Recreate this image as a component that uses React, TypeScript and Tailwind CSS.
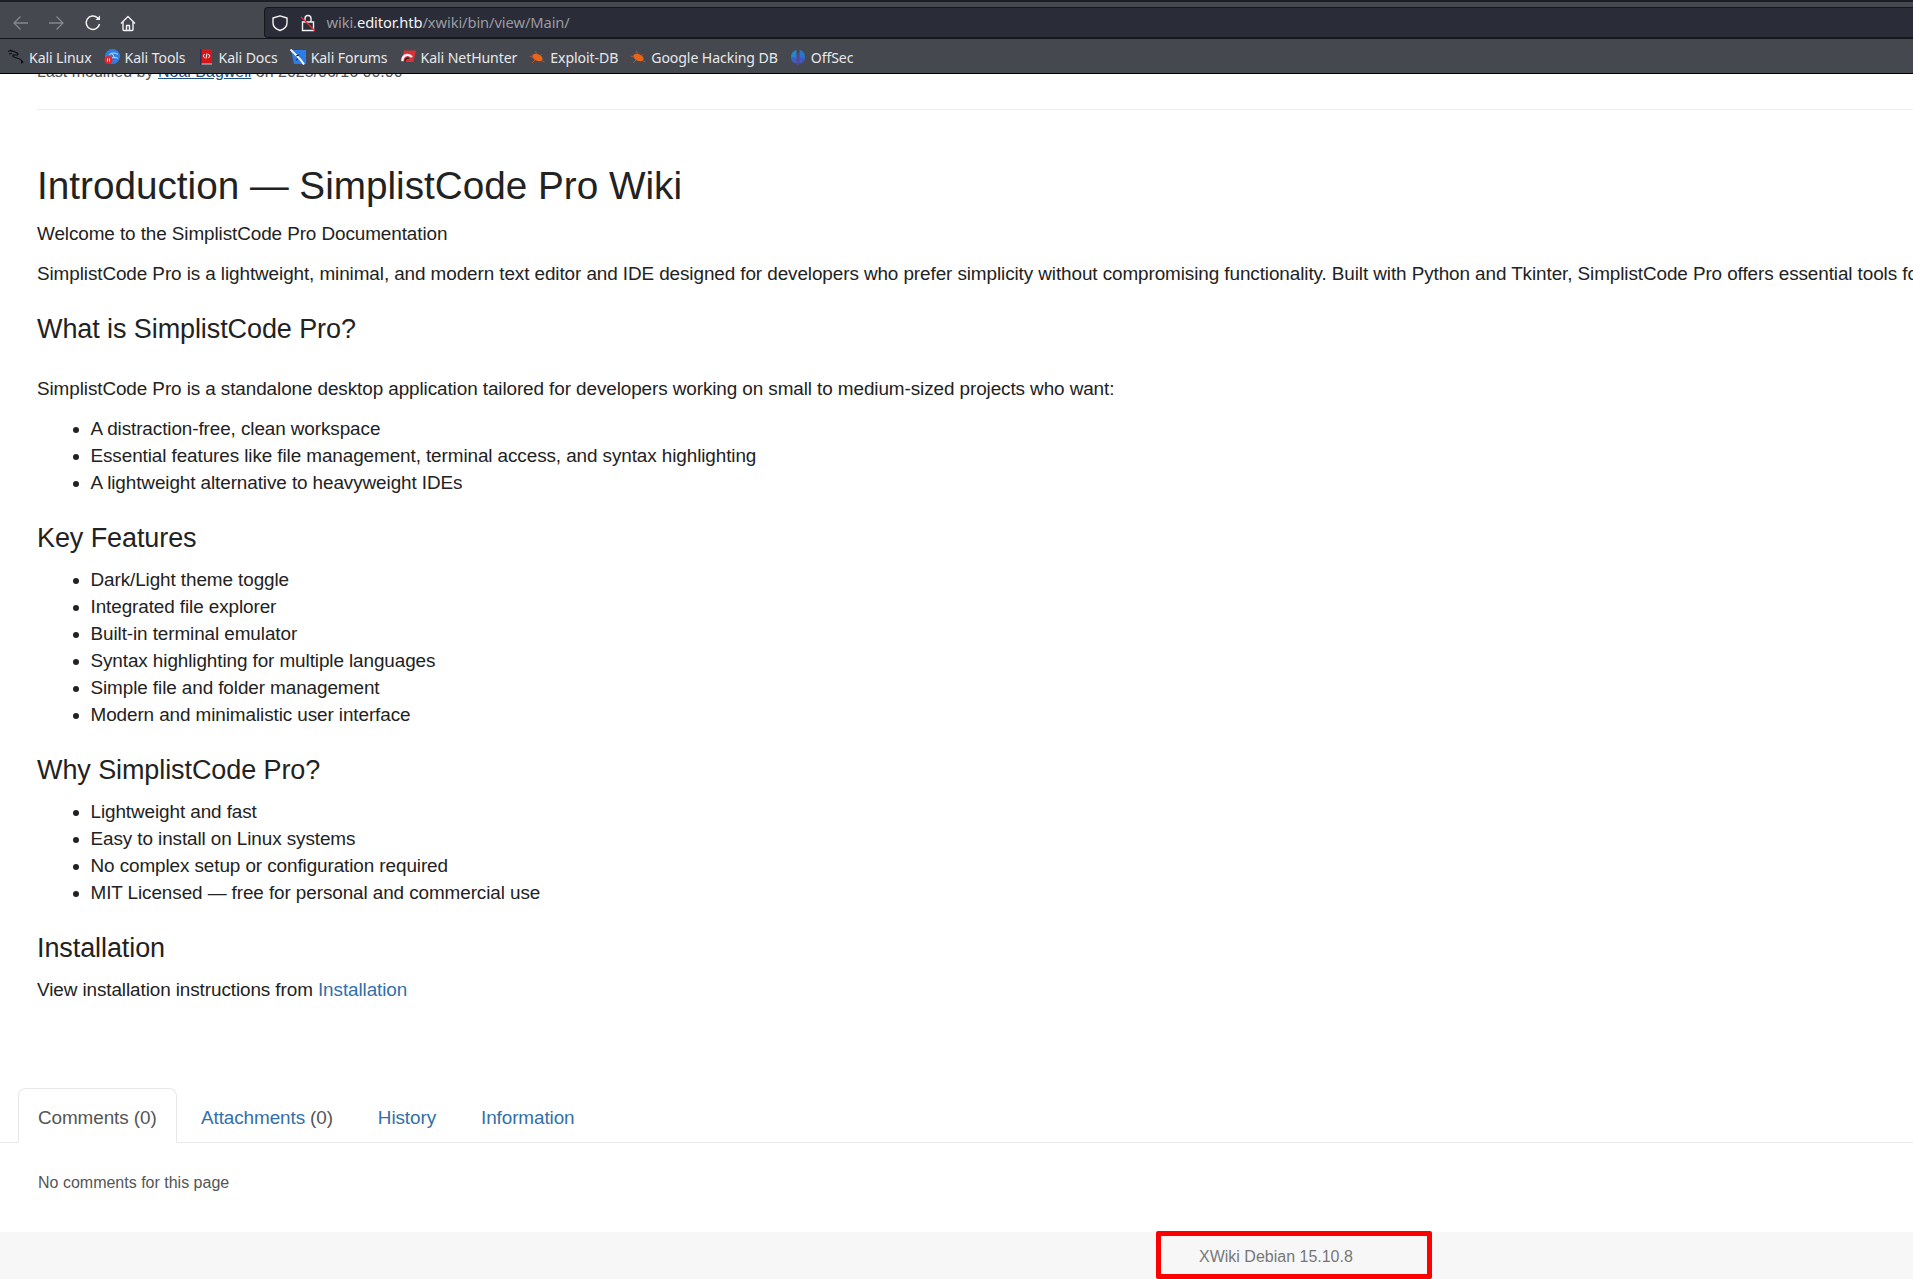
const bookmarks = [
  { label: 'Kali Linux', icon: <KaliIcon /> },
  { label: 'Kali Tools', icon: <ToolsIcon /> },
  { label: 'Kali Docs', icon: <DocsIcon /> },
  { label: 'Kali Forums', icon: <ForumsIcon /> },
  { label: 'Kali NetHunter', icon: <NetHunterIcon /> },
  { label: 'Exploit-DB', icon: <BugIcon /> },
  { label: 'Google Hacking DB', icon: <BugIcon /> },
  { label: 'OffSec', icon: <OffSecIcon /> },
];

function KaliIcon() {
  return (
    <svg width="16" height="16" viewBox="0 0 16 16" fill="none" stroke="#0c0c0c" strokeWidth="1.1">
      <path d="M0 2.500c1-.8 2.500-1 4-.5 2 .5 4 1 5.500 2.200 1 .9.500 1.800-1 1.800S5.500 5.500 5 6.500s1 1.800 3 2.300 4 .8 5 2.200c.8 1 .7 2.500.2 3.500" />
      <path d="M2 0.800l2.500 1.400M1 5l3-.5M13.500 11.500c1.200.8 1.500 1.800 1.200 2.700" />
    </svg>
  );
}

function ToolsIcon() {
  return (
    <svg width="16" height="16" viewBox="0 0 16 16">
      <circle cx="8.500" cy="7.500" r="7.500" fill="#2f7fe0" />
      <path d="M5 6c3-2.500 6-2.500 9-.5M7 4c2 1 3 3 3 5M8 9c2-.8 4-.8 6 .5" stroke="#d8e8fb" strokeWidth="0.900" fill="none" />
      <circle cx="4.500" cy="11" r="4" fill="#e8242c" />
      <path d="M3.500 9.500v3M5.500 9.500v3" stroke="#fff" strokeWidth="1" />
    </svg>
  );
}

function DocsIcon() {
  return (
    <svg width="16" height="16" viewBox="0 0 16 16">
      <rect x="2" y="0" width="12" height="15" fill="#d4161b" />
      <rect x="2" y="0" width="1.500" height="16" fill="#2b2f55" />
      <rect x="3.500" y="14.500" width="10.500" height="1" fill="#c9c9d2" />
      <path d="M6.800 5L5 7l1.800 2M10.200 5L12 7l-1.800 2M9 4.500L8 9.500" stroke="#fff" strokeWidth="1" fill="none" />
    </svg>
  );
}

function ForumsIcon() {
  return (
    <svg width="16" height="16" viewBox="0 0 16 16">
      <path d="M1 1h15v14H4z" fill="#2a7de6" />
      <path d="M0.500 0.500C3 3 5 5 8 8s4.500 5 6 7.500" stroke="#f4f4f4" strokeWidth="2" fill="none" />
      <path d="M6 7l3-1M8 10l-2 1" stroke="#14202e" strokeWidth="1" />
    </svg>
  );
}

function NetHunterIcon() {
  return (
    <svg width="16" height="16" viewBox="0 0 16 16">
      <path d="M4 1.500h12l-2.500 11.500H1z" fill="#dc3039" />
      <path d="M2.500 12c-.5-5 5-8.500 9.500-4" stroke="#f5f5f5" strokeWidth="2.400" fill="none" />
      <path d="M5 13c-.5-3 2-4.500 4-3.500" stroke="#1b1b1f" strokeWidth="1.200" fill="none" />
    </svg>
  );
}

function BugIcon() {
  return (
    <svg width="16" height="16" viewBox="0 0 16 16">
      <ellipse cx="8.500" cy="8.500" rx="5.500" ry="3.300" fill="#e8651c" transform="rotate(25 8.500 8.500)" />
      <path d="M0.500 7l4 1.500M3 14l3-3M6 2l2 3M13 5l-2 2M15.500 13l-3-1" stroke="#b9562a" strokeWidth="0.900" />
    </svg>
  );
}

function OffSecIcon() {
  return (
    <svg width="16" height="16" viewBox="0 0 16 16">
      <path d="M6.500 1C3 1.500 1 4.500 1 8s2.500 6 5.500 6.500z" fill="#2484cf" />
      <path d="M9.500 1C13 1.500 15 4.500 15 8s-2.500 6-5.500 6.500z" fill="#2a76c9" />
      <path d="M1 8c0 3.500 2.500 6 5.500 6.500V9zM15 8c0 3.500-2.500 6-5.500 6.500V9z" fill="#4a4cc8" opacity="0.700" />
      <rect x="7.500" y="4" width="1" height="12" fill="#6a3fd0" />
    </svg>
  );
}

const sans = 'font-["Liberation_Sans",Arial,sans-serif]';

function Browser() {
  return (
    <header className='h-[74px] bg-[#45484f] font-["Noto_Sans",sans-serif] border-b border-black'>
      <div className="h-[2px] bg-[#1d1e24]" />
      <div className="h-[36px] flex items-start pt-[5px]">
        <div className="flex items-center h-[31px] gap-[15px] pl-[11px] w-[264px]">
          <svg width="20" height="20" viewBox="0 0 20 20" fill="none" stroke="#85878c" strokeWidth="1.300">
            <path d="M17 10H3.500M9.500 3.500L3 10l6.500 6.500" />
          </svg>
          <svg width="20" height="20" viewBox="0 0 20 20" fill="none" stroke="#85878c" strokeWidth="1.300">
            <path d="M3 10h13.500M10.500 3.500L17 10l-6.500 6.500" />
          </svg>
          <svg className="ml-[2px]" width="20" height="20" viewBox="0 0 20 20" fill="none" stroke="#f2f2f2" strokeWidth="1.500">
            <path d="M16.500 11a6.700 6.700 0 1 1-2-6.200L16.500 6.500" />
            <path d="M17 2.500V7h-4.500z" fill="#f2f2f2" stroke="none" />
          </svg>
          <svg width="20" height="20" viewBox="0 0 20 20" fill="none" stroke="#f2f2f2" strokeWidth="1.400" strokeLinejoin="round">
            <path d="M3 10.500l7-7 7 7M5 9v7.500a1 1 0 0 0 1 1h8a1 1 0 0 0 1-1V9M8.500 17.500V12.500h3v5" />
          </svg>
        </div>
        <div className="flex-1 h-[31px] bg-[#2a2c37] rounded-l-[4px] border-y border-l border-[#17181d] flex items-center pl-[6px] text-[14.700px] text-[#9a9ba1]">
          <svg width="18" height="18" viewBox="0 0 18 18" fill="none" stroke="#f2f2f2" strokeWidth="1.400" strokeLinejoin="round">
            <path d="M9 1.800l7 2.200v5c0 3.800-3 6.200-7 7.500-4-1.300-7-3.700-7-7.500V4z" />
          </svg>
          <svg className="ml-[10px]" width="18" height="18" viewBox="0 0 18 18" fill="none" strokeWidth="1.400">
            <path d="M3.500 8h11v8.500h-11zM6 8V4.500a3 3 0 0 1 6 0V8" stroke="#f2f2f2" />
            <path d="M2 3l14 14" stroke="#e2283c" />
          </svg>
          <span className="ml-[9.500px]">
            wiki.<span className="text-[#f4f4f5]">editor.htb</span>/xwiki/bin/view/Main/
          </span>
        </div>
      </div>
      <nav className="h-[35px] flex items-center pl-[8px] gap-[12px] text-[14.100px] text-[#e8e8ea] border-t border-[#17181d] pt-[2px]">
        {bookmarks.map((b) => (
          <span key={b.label} className="flex items-center gap-[5px]">
            {b.icon}
            <span>{b.label}</span>
          </span>
        ))}
      </nav>
    </header>
  );
}

function Bullets({ items }: { items: string[] }) {
  return (
    <ul className="list-disc pl-[53.500px] mb-[13.500px] leading-[27px] marker:text-[#222]">
      {items.map((t) => (
        <li key={t}>{t}</li>
      ))}
    </ul>
  );
}

function Heading({ children, className }: { children: string; className: string }) {
  return <h2 className={`text-[27px] leading-[30px] ${className}`}>{children}</h2>;
}

export default function App() {
  return (
    <div className={`w-[1913px] h-[1279px] overflow-hidden bg-white text-[#222222] text-[18.900px] leading-[27px] tracking-[-0.09px] ${sans}`}>
      <Browser />
      <main className="h-[1205px] flex flex-col">
        <div className="ml-[37px] border-b border-[#eeeeee] h-[36px] overflow-hidden">
          <p className="-mt-[14px] text-[16px] leading-[24px] tracking-normal text-[#555]">
            Last modified by <span className="text-[#1f4f7a] underline">Noal Bagwell</span> on 2025/06/16 00:00
          </p>
        </div>
        <article className="pl-[37px] whitespace-nowrap">
          <h1 className="text-[38.700px] leading-[44px] tracking-normal mt-[54px] mb-[12px]">Introduction — SimplistCode Pro Wiki</h1>
          <p className="mb-[13px]">Welcome to the SimplistCode Pro Documentation</p>
          <p className="mb-[27px]">
            SimplistCode Pro is a lightweight, minimal, and modern text editor and IDE designed for developers who prefer simplicity without compromising functionality. Built with Python and Tkinter, SimplistCode Pro offers essential tools for
          </p>
          <Heading className="mb-[31px]">What is SimplistCode Pro?</Heading>
          <p className="mb-[13px]">SimplistCode Pro is a standalone desktop application tailored for developers working on small to medium-sized projects who want:</p>
          <Bullets items={['A distraction-free, clean workspace', 'Essential features like file management, terminal access, and syntax highlighting', 'A lightweight alternative to heavyweight IDEs']} />
          <Heading className="mt-[27px] mb-[13px]">Key Features</Heading>
          <Bullets items={['Dark/Light theme toggle', 'Integrated file explorer', 'Built-in terminal emulator', 'Syntax highlighting for multiple languages', 'Simple file and folder management', 'Modern and minimalistic user interface']} />
          <Heading className="mt-[27px] mb-[13px]">Why SimplistCode Pro?</Heading>
          <Bullets items={['Lightweight and fast', 'Easy to install on Linux systems', 'No complex setup or configuration required', 'MIT Licensed — free for personal and commercial use']} />
          <Heading className="mt-[27px] mb-[13px]">Installation</Heading>
          <p>
            View installation instructions from <a className="text-[#336fa8]">Installation</a>
          </p>
        </article>
        <div className="mt-[85px] flex items-end border-b border-[#e8e8e8] h-[55px] pl-[17.500px]">
          <div className="h-[55px] w-[159.500px] -mb-[1px] pt-[4px] bg-white border border-b-white border-[#e8e8e8] rounded-t-[8px] flex items-center pl-[19.500px] text-[#555555]">Comments (0)</div>
          <div className="h-[54px] pt-[4px] flex items-center pl-[24px] text-[#336fa8]">
            Attachments<span className="ml-[5px] text-[#555555]">(0)</span>
          </div>
          <div className="h-[54px] pt-[4px] flex items-center pl-[45px] text-[#336fa8]">History</div>
          <div className="h-[54px] pt-[4px] flex items-center pl-[45px] text-[#336fa8]">Information</div>
        </div>
        <p className="pl-[38px] mt-[28px] text-[16px] leading-[24px] tracking-normal text-[#555555]">No comments for this page</p>
        <footer className="mt-auto h-[47px] bg-[#f7f7f7] pl-[1156px]">
          <div className="w-[276px] h-[48px] -mt-[1px] pt-[3px] border-[5px] border-[#ff0000] rounded-[2px] pl-[38px] flex items-center text-[16px] tracking-normal text-[#777777]">
            XWiki Debian 15.10.8
          </div>
        </footer>
      </main>
    </div>
  );
}
